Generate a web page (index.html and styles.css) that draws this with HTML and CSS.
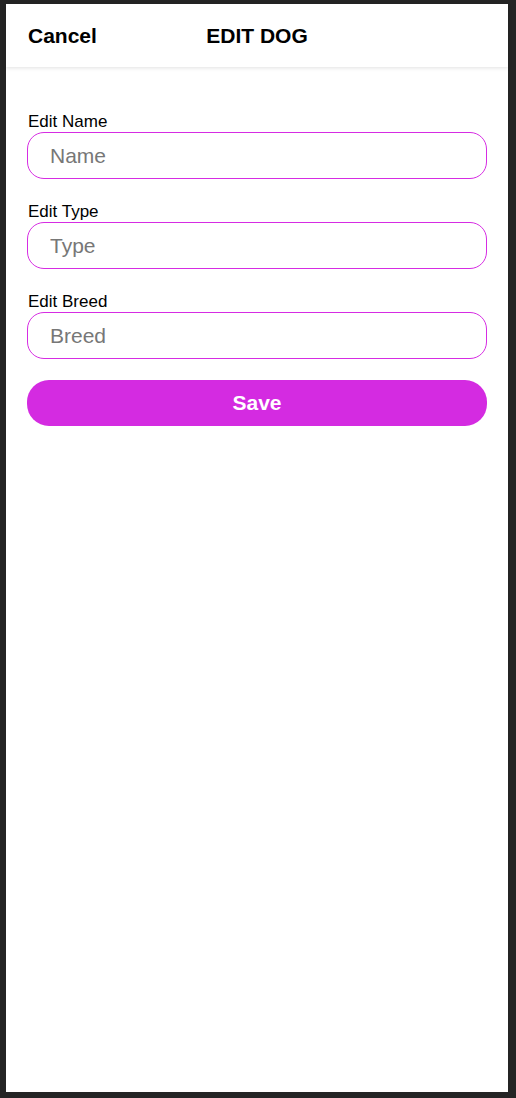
FILE: index.html
```html
<!DOCTYPE html>
<html>
<head>
<meta charset="utf-8">
<link rel="stylesheet" href="styles.css">
</head>
<body>
<div class="screen">
  <header class="topbar">
    <span class="cancel">Cancel</span>
    <span class="title">EDIT DOG</span>
  </header>
  <form class="form">
    <label class="field">
      <span class="label">Edit Name</span>
      <input class="input" type="text" placeholder="Name">
    </label>
    <label class="field">
      <span class="label">Edit Type</span>
      <input class="input" type="text" placeholder="Type">
    </label>
    <label class="field field-last">
      <span class="label">Edit Breed</span>
      <input class="input" type="text" placeholder="Breed">
    </label>
    <button class="save" type="button">Save</button>
  </form>
</div>
</body>
</html>
```

FILE: styles.css
```css
html, body {
  margin: 0;
  padding: 0;
  background: #242424;
}
body {
  padding: 4px 8px 6px 6px;
  font-family: "Liberation Sans", Arial, sans-serif;
}
.screen {
  background: #fff;
  height: 1088px;
  display: flex;
  flex-direction: column;
}
.topbar {
  position: relative;
  height: 63px;
  display: flex;
  align-items: center;
  padding: 0 22px;
  box-shadow: 0 1px 4px rgba(0,0,0,0.12);
  color: #000;
  font-weight: bold;
  font-size: 21px;
}
.cancel {
  padding-top: 1px;
}
.title {
  position: absolute;
  left: 0;
  right: 0;
  text-align: center;
  pointer-events: none;
  padding-top: 1px;
}
.form {
  padding: 45px 21px 0 21px;
  display: flex;
  flex-direction: column;
}
.field {
  display: flex;
  flex-direction: column;
  margin-bottom: 23px;
}
.field-last {
  margin-bottom: 21px;
}
.label {
  font-size: 17px;
  line-height: 20px;
  color: #000;
  padding-left: 1px;
}
.input {
  box-sizing: border-box;
  height: 47px;
  border: 1px solid #d62ce3;
  border-radius: 17px;
  padding: 0 22px;
  font-family: "Liberation Sans", Arial, sans-serif;
  font-size: 21px;
  color: #000;
  background: #fff;
  outline: none;
  margin: 0;
}
.input::placeholder {
  color: #777;
}
.save {
  height: 46px;
  margin-top: 0;
  border: none;
  border-radius: 22px;
  background: #d42be1;
  color: #fff;
  font-family: "Liberation Sans", Arial, sans-serif;
  font-weight: bold;
  font-size: 21px;
  padding: 0;
}
```
